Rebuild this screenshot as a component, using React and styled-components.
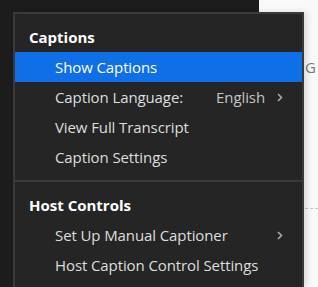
import React from 'react';
import styled, { createGlobalStyle } from 'styled-components';

const GlobalStyle = createGlobalStyle`
  html, body {
    margin: 0;
    padding: 0;
    height: 100%;
    overflow: hidden;
    font-family: "Open Sans", "Noto Sans", sans-serif;
  }
  #root {
    height: 100%;
  }
`;

const Page = styled.div`
  position: relative;
  display: flex;
  width: 318px;
  height: 287px;
`;

const DarkSide = styled.div`
  width: 259px;
  background: #1c1c1c;
`;

const LightSide = styled.div`
  flex: 1;
  background: #f9f9f9;
  display: flex;
  flex-direction: column;
  padding-top: 57px;
  padding-left: 46px;
  font-size: 15px;
  line-height: 20px;
  color: #7a7a7a;
  box-sizing: border-box;
`;

const Dashed = styled.div`
  margin-top: 131px;
  border-top: 1px dashed #c8c8c8;
`;

const Menu = styled.div`
  position: absolute;
  left: 13px;
  top: 12px;
  width: 291px;
  border: 2px solid #3a3a3a;
  border-bottom: none;
  background: #252525;
  box-sizing: border-box;
  box-shadow: 3px 0 6px rgba(0, 0, 0, 0.12);
`;

const Section = styled.div`
  padding: 8px 0;
`;

const Separator = styled.div`
  height: 2px;
  background: #3a3a3a;
`;

const Heading = styled.div`
  height: 30px;
  display: flex;
  align-items: center;
  padding-left: 14px;
  font-size: 15px;
  font-weight: 700;
  color: #ffffff;
`;

const Item = styled.div`
  height: 30px;
  display: flex;
  align-items: center;
  justify-content: space-between;
  padding: 0 19px 0 40px;
  font-size: 15px;
  letter-spacing: -0.1px;
  color: ${p => (p.$active ? '#ffffff' : '#dedede')};
  background: ${p => (p.$active ? '#0f6fe6' : 'transparent')};
`;

const Right = styled.span`
  display: flex;
  align-items: center;
  gap: 12px;
  color: #c4c4c4;
`;

const Chevron = () => (
  <svg width="6" height="9" viewBox="0 0 6 9">
    <path d="M1 1 L4.5 4.5 L1 8" fill="none" stroke="#a8a8a8" strokeWidth="1.6" />
  </svg>
);

export default function App() {
  return (
    <>
      <GlobalStyle />
      <Page>
        <DarkSide />
        <LightSide>
          <span>G</span>
          <Dashed />
        </LightSide>
        <Menu>
          <Section>
            <Heading>Captions</Heading>
            <Item $active>Show Captions</Item>
            <Item>
              Caption Language:
              <Right>
                English
                <Chevron />
              </Right>
            </Item>
            <Item>View Full Transcript</Item>
            <Item>Caption Settings</Item>
          </Section>
          <Separator />
          <Section>
            <Heading>Host Controls</Heading>
            <Item>
              Set Up Manual Captioner
              <Right>
                <Chevron />
              </Right>
            </Item>
            <Item>Host Caption Control Settings</Item>
          </Section>
        </Menu>
      </Page>
    </>
  );
}
